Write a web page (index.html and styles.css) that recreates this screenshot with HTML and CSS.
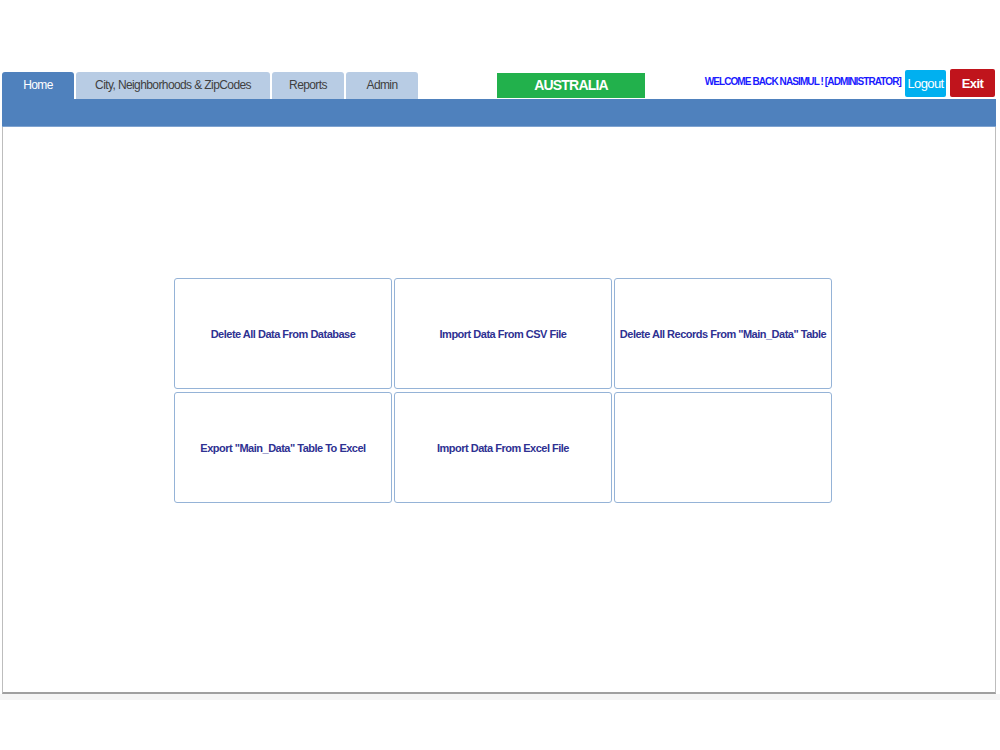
FILE: index.html
```html
<!DOCTYPE html>
<html lang="en">
<head>
    <meta charset="UTF-8">
    <title>Data Admin</title>
    <link rel="stylesheet" href="styles.css">
</head>
<body>
    <div class="app">
        <!-- Pestañas y cabecera -->
        <div class="topbar">
            <div class="tabs">
                <div class="tab active tab-home">Home</div>
                <div class="tab tab-city">City, Neighborhoods &amp; ZipCodes</div>
                <div class="tab tab-reports">Reports</div>
                <div class="tab tab-admin">Admin</div>
            </div>
            <div class="country">AUSTRALIA</div>
            <div class="user">
                <span class="welcome">WELCOME BACK NASIMUL ! [ADMINISTRATOR]</span>
                <button class="btn logout">Logout</button>
                <button class="btn exit">Exit</button>
            </div>
        </div>
        <div class="menubar"></div>

        <!-- Contenido -->
        <div class="content">
            <div class="actions">
                <div class="action">Delete All Data From Database</div>
                <div class="action">Import Data From CSV File</div>
                <div class="action">Delete All Records From "Main_Data" Table</div>
                <div class="action">Export "Main_Data" Table To Excel</div>
                <div class="action">Import Data From Excel File</div>
                <div class="action"></div>
            </div>
        </div>
    </div>
    <div class="bottom"></div>
</body>
</html>
```
FILE: styles.css
```css
body {
    margin: 0;
    background: #fff;
    font-family: "Liberation Sans", Arial, sans-serif;
}

.app {
    margin: 69px 0 0 2px;
    width: 994px;
}

/* Cabecera */
.topbar {
    display: flex;
    align-items: flex-end;
    height: 30px;
}

.tabs {
    display: flex;
    gap: 2px;
}

.tab {
    height: 27px;
    line-height: 27px;
    text-align: center;
    background: #b8cce4;
    color: #404040;
    font-size: 12px;
    letter-spacing: -0.6px;
    border-radius: 3px 3px 0 0;
}

.tab.active {
    background: #4f81bd;
    color: #fff;
}

.tab-home { width: 72px; }
.tab-city { width: 194px; }
.tab-reports { width: 72px; }
.tab-admin { width: 72px; }

.country {
    width: 148px;
    height: 25px;
    line-height: 25px;
    margin: 0 0 1px 79px;
    background: #22b14c;
    color: #fff;
    font-weight: bold;
    font-size: 14px;
    letter-spacing: -0.8px;
    text-align: center;
}

.user {
    display: flex;
    align-items: flex-end;
    margin-left: auto;
    margin-right: 1px;
    height: 30px;
}

.welcome {
    align-self: center;
    margin: 0 4px 5px 0;
    color: #1a1aff;
    font-size: 10px;
    font-weight: bold;
    letter-spacing: -0.9px;
}

.btn {
    border: none;
    border-radius: 2px;
    color: #fff;
    font-family: inherit;
    font-size: 13px;
    letter-spacing: -0.6px;
    padding: 0;
    height: 28px;
    margin-bottom: 2px;
}

.logout {
    width: 41px;
    height: 27px;
    background: #00b0f0;
}

.exit {
    width: 45px;
    margin-left: 4px;
    background: #c0141c;
    font-weight: bold;
}

.menubar {
    height: 27px;
    background: #4f81bd;
    border-bottom: 1px solid #7fa3d0;
}

/* Contenido */
.content {
    height: 567px;
    border: 1px solid #bdbdbd;
    border-top: none;
    border-bottom: 2px solid #a0a0a0;
    padding-top: 151px;
    box-sizing: border-box;
}

.actions {
    display: grid;
    grid-template-columns: repeat(3, 218px);
    grid-auto-rows: 111px;
    gap: 3px 2px;
    margin-left: 171px;
}

.action {
    display: flex;
    align-items: center;
    justify-content: center;
    border: 1px solid #95b3d7;
    border-radius: 3px;
    color: #2e3192;
    font-size: 11px;
    font-weight: bold;
    letter-spacing: -0.5px;
    white-space: nowrap;
}

.bottom {
    height: 6px;
    background: #f5f5f5;
}
```
